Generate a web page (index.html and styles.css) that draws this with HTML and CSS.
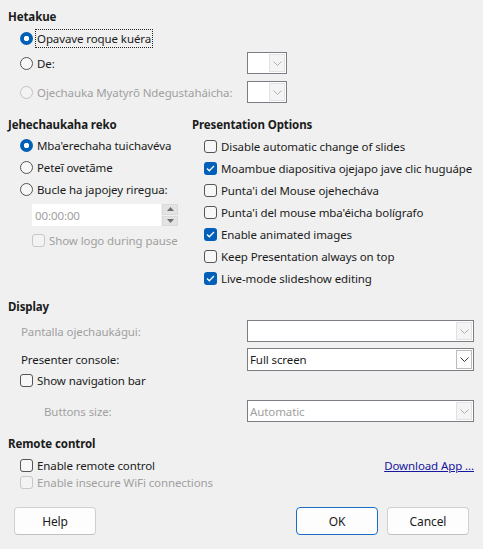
FILE: index.html
```html
<!DOCTYPE html>
<html>
<head>
<meta charset="utf-8">
<link rel="stylesheet" href="styles.css">
</head>
<body>
<div class="dlg">
  <div class="head">Hetakue</div>
  <div class="row h20 m2 ind">
    <span class="radio on"></span><span class="lbl focus">Opavave roque kuéra</span>
  </div>
  <div class="grid2 h22 m4">
    <div class="row ind"><span class="radio"></span><span class="lbl">De:</span></div>
    <div class="combo small"><span class="val"></span><span class="arr dis"><svg width="9" height="5" viewBox="0 0 9 5"><polyline points="0.5,0.5 4.5,4.5 8.5,0.5" /></svg></span></div>
  </div>
  <div class="grid2 h22 m7">
    <div class="row ind dis-t"><span class="radio dis"></span><span class="lbl">Ojechauka Myatyrõ Ndegustaháicha:</span></div>
    <div class="combo small"><span class="val"></span><span class="arr dis"><svg width="9" height="5" viewBox="0 0 9 5"><polyline points="0.5,0.5 4.5,4.5 8.5,0.5" /></svg></span></div>
  </div>

  <div class="cols m13">
    <div class="col-left">
      <div class="head">Jehechaukaha reko</div>
      <div class="row h22 ind"><span class="radio on"></span><span class="lbl">Mba'erechaha tuichavéva</span></div>
      <div class="row h22 ind"><span class="radio"></span><span class="lbl">Peteĩ ovetãme</span></div>
      <div class="row h22 ind"><span class="radio"></span><span class="lbl">Bucle ha japojey riregua:</span></div>
      <div class="spin m4">
        <span class="spin-field">00:00:00</span>
        <span class="spin-btns"><span class="sb"><svg width="7" height="4" viewBox="0 0 7 4"><polygon points="3.5,0 7,4 0,4"/></svg></span><span class="sb"><svg width="7" height="4" viewBox="0 0 7 4"><polygon points="0,0 7,0 3.5,4"/></svg></span></span>
      </div>
      <div class="row h20 m4 ind2 dis-t"><span class="check dis"></span><span class="lbl">Show logo during pause</span></div>
    </div>
    <div class="col-right">
      <div class="head">Presentation Options</div>
      <div class="row h22 m1 indr"><span class="check"></span><span class="lbl">Disable automatic change of slides</span></div>
      <div class="row h22 indr"><span class="check on"><svg width="9" height="7" viewBox="0 0 9 7"><polyline points="1,3.5 3.3,5.8 8,1"/></svg></span><span class="lbl">Moambue diapositiva ojejapo jave clic huguápe</span></div>
      <div class="row h22 indr"><span class="check"></span><span class="lbl">Punta'i del Mouse ojehecháva</span></div>
      <div class="row h22 indr"><span class="check"></span><span class="lbl">Punta'i del mouse mba'éicha bolígrafo</span></div>
      <div class="row h22 indr"><span class="check on"><svg width="9" height="7" viewBox="0 0 9 7"><polyline points="1,3.5 3.3,5.8 8,1"/></svg></span><span class="lbl">Enable animated images</span></div>
      <div class="row h22 indr"><span class="check"></span><span class="lbl">Keep Presentation always on top</span></div>
      <div class="row h22 indr"><span class="check on"><svg width="9" height="7" viewBox="0 0 9 7"><polyline points="1,3.5 3.3,5.8 8,1"/></svg></span><span class="lbl">Live-mode slideshow editing</span></div>
    </div>
  </div>

  <div class="head m9">Display</div>
  <div class="grid2 h22 m4">
    <div class="row ind13 dis-t"><span>Pantalla ojechaukágui:</span></div>
    <div class="combo wide"><span class="val"></span><span class="arr dis"><svg width="9" height="5" viewBox="0 0 9 5"><polyline points="0.5,0.5 4.5,4.5 8.5,0.5" /></svg></span></div>
  </div>
  <div class="grid2 h23 m6">
    <div class="row ind13"><span>Presenter console:</span></div>
    <div class="combo wide"><span class="val">Full screen</span><span class="arr"><svg width="9" height="5" viewBox="0 0 9 5"><polyline points="0.5,0.5 4.5,4.5 8.5,0.5" /></svg></span></div>
  </div>
  <div class="row h18 ind"><span class="check"></span><span class="lbl">Show navigation bar</span></div>
  <div class="grid2 h22 m11">
    <div class="row ind36 dis-t"><span>Buttons size:</span></div>
    <div class="combo wide"><span class="val dis-t">Automatic</span><span class="arr dis"><svg width="9" height="5" viewBox="0 0 9 5"><polyline points="0.5,0.5 4.5,4.5 8.5,0.5" /></svg></span></div>
  </div>

  <div class="head m13">Remote control</div>
  <div class="row h18 m3 ind between">
    <div class="row"><span class="check"></span><span class="lbl">Enable remote control</span></div>
    <a class="link" href="#">Download App ...</a>
  </div>
  <div class="row h17 ind dis-t"><span class="check dis"></span><span class="lbl">Enable insecure WiFi connections</span></div>

  <div class="buttons">
    <button class="btn help">Help</button>
    <div class="btn-right">
      <button class="btn ok">OK</button>
      <button class="btn">Cancel</button>
    </div>
  </div>
</div>
</body>
</html>
```

FILE: styles.css
```css
html, body {
  margin: 0;
  padding: 0;
  background: #f0f0f0;
}
body {
  font-family: "Noto Sans", "Open Sans", sans-serif;
  font-size: 11.5px;
  letter-spacing: -0.1px;
  color: #1b1b1b;
  width: 483px;
  height: 549px;
  overflow: hidden;
  white-space: nowrap;
}
.dlg {
  padding: 8px 9px 0 8px;
}
.head {
  font-weight: bold;
  height: 18px;
  line-height: 18px;
}
.row {
  display: flex;
  align-items: center;
}
.between { justify-content: space-between; }
.h16 { height: 16px; }
.h17 { height: 17px; }
.h18 { height: 18px; }
.h20 { height: 20px; }
.h22 { height: 22px; }
.h23 { height: 23px; }
.m1 { margin-top: 1px; }
.m2 { margin-top: 2px; }
.m3 { margin-top: 3px; }
.m4 { margin-top: 4px; }
.m6 { margin-top: 6px; }
.m7 { margin-top: 7px; }
.m9 { margin-top: 9px; }
.m11 { margin-top: 11px; }
.m13 { margin-top: 13px; }
.ind { padding-left: 12px; }
.ind13 { padding-left: 13px; }
.ind36 { padding-left: 36px; }
.ind2 { padding-left: 24px; }
.indr { padding-left: 12px; }
.lbl { margin-left: 4px; line-height: 17px; }
.dis-t { color: #a0a0a0; }

.focus {
  outline: 1px dotted #222;
  outline-offset: 0;
  padding: 0 1px;
  margin-left: 3px;
}

.grid2 {
  display: grid;
  grid-template-columns: 239px 227px;
  align-items: center;
}

.radio {
  width: 13px;
  height: 13px;
  box-sizing: border-box;
  border-radius: 50%;
  border: 1px solid #555;
  background: #f7f7f7;
  flex: none;
}
.radio.on {
  border: none;
  background: radial-gradient(circle at 50% 50%, #fff 0 2.4px, #005fb8 3px);
}
.radio.dis {
  border-color: #c3c3c3;
  background: #f3f3f3;
}

.check {
  width: 13px;
  height: 13px;
  box-sizing: border-box;
  border-radius: 3px;
  border: 1px solid #555;
  background: #f7f7f7;
  flex: none;
  display: flex;
  align-items: center;
  justify-content: center;
}
.check.on {
  border: none;
  background: #005fb8;
}
.check.on svg polyline {
  fill: none;
  stroke: #fff;
  stroke-width: 1.3;
}
.check.dis {
  border-color: #c8c8c8;
  background: #f3f3f3;
}

.combo {
  height: 100%;
  box-sizing: border-box;
  border: 1px solid #7b7d85;
  background: #fff;
  display: flex;
  align-items: stretch;
}
.combo.small { width: 40px; }
.combo.wide { width: 227px; }
.combo .val {
  flex: 1;
  padding-left: 2px;
  display: flex;
  align-items: center;
}
.combo .arr {
  width: 16px;
  margin: 1px 1px 1px 0;
  box-sizing: border-box;
  border: 1px solid #bcbcbc;
  background: #fdfdfd;
  display: flex;
  align-items: center;
  justify-content: center;
}
.combo .arr svg polyline {
  fill: none;
  stroke: #333;
  stroke-width: 1;
}
.combo .arr.dis {
  border-color: #e2e2e2;
  background: #f4f4f4;
}
.combo .arr.dis svg polyline {
  stroke: #b0b0b0;
}

.cols {
  display: flex;
}
.col-left {
  width: 184px;
}
.col-right {
  flex: 1;
}

.spin {
  margin-left: 24px;
  width: 146px;
  height: 22px;
  display: flex;
}
.spin-field {
  flex: 1;
  background: #fff;
  color: #a0a0a0;
  padding-left: 3px;
  display: flex;
  align-items: center;
}
.spin-btns {
  width: 16px;
  display: flex;
  flex-direction: column;
  gap: 1px;
  padding-left: 1px;
}
.sb {
  flex: 1;
  background: #e3e3e3;
  border: 1px solid #dadada;
  display: flex;
  align-items: center;
  justify-content: center;
}
.sb svg polygon { fill: #6f6f6f; }

.link {
  color: #16169e;
  text-decoration: underline;
  line-height: 17px;
}

.buttons {
  margin-top: 16px;
  display: flex;
  justify-content: space-between;
  padding-left: 6px;
  padding-right: 5px;
}
.btn-right {
  display: flex;
  gap: 9px;
}
.btn {
  width: 82px;
  height: 28px;
  box-sizing: border-box;
  font-family: inherit;
  font-size: 12px;
  letter-spacing: inherit;
  color: #1b1b1b;
  background: #fdfdfd;
  border: 1px solid #d0d0d0;
  border-bottom-color: #c2c2c2;
  border-radius: 4px;
  padding: 0;
}
.btn.ok {
  border-color: #1a6fc4;
}
```
